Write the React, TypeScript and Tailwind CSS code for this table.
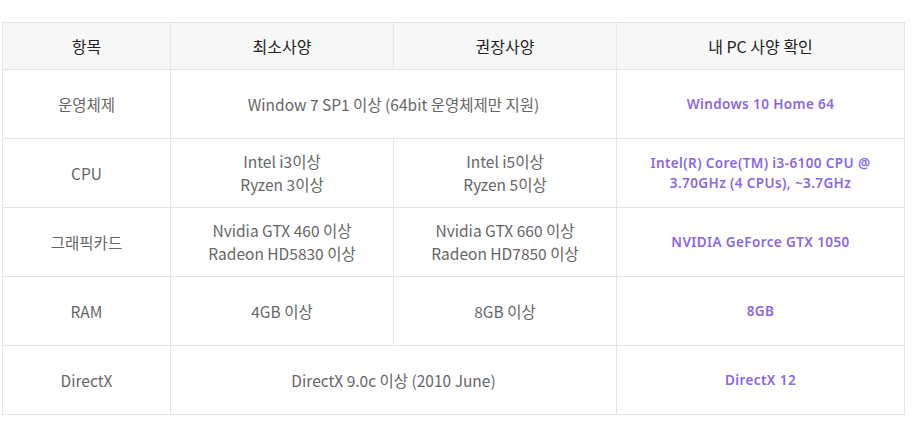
const rows: { label: string; min: string[]; rec?: string[]; mine: string[] }[] = [
  { label: '운영체제', min: ['Window 7 SP1 이상 (64bit 운영체제만 지원)'], mine: ['Windows 10 Home 64'] },
  { label: 'CPU', min: ['Intel i3이상', 'Ryzen 3이상'], rec: ['Intel i5이상', 'Ryzen 5이상'], mine: ['Intel(R) Core(TM) i3-6100 CPU @', '3.70GHz (4 CPUs), ~3.7GHz'] },
  { label: '그래픽카드', min: ['Nvidia GTX 460 이상', 'Radeon HD5830 이상'], rec: ['Nvidia GTX 660 이상', 'Radeon HD7850 이상'], mine: ['NVIDIA GeForce GTX 1050'] },
  { label: 'RAM', min: ['4GB 이상'], rec: ['8GB 이상'], mine: ['8GB'] },
  { label: 'DirectX', min: ['DirectX 9.0c 이상 (2010 June)'], mine: ['DirectX 12'] },
];

const lines = (xs: string[]) => xs.map((t, i) => <div key={i}>{t}</div>);

export default function App() {
  return (
    <div className="w-[911px] h-[423px] bg-white pt-[22px] pl-[2px] font-['Noto_Sans_CJK_KR','Noto_Sans',sans-serif]">
      <table className="w-[902px] border-collapse table-fixed text-center">
        <colgroup>
          <col className="w-[168px]" />
          <col className="w-[223px]" />
          <col className="w-[223px]" />
          <col className="w-[288px]" />
        </colgroup>
        <thead className="bg-[#f7f7f7] text-[#222] text-[16px]">
          <tr className="h-[47px]">
            <th className="border border-[#e5e5e5] font-normal">항목</th>
            <th className="border border-[#e5e5e5] font-normal">최소사양</th>
            <th className="border border-[#e5e5e5] font-normal">권장사양</th>
            <th className="border border-[#e5e5e5] font-normal">내 PC 사양 확인</th>
          </tr>
        </thead>
        <tbody className="text-[#666] text-[15.5px] leading-[23px]">
          {rows.map((r) => (
            <tr key={r.label} className="h-[69px]">
              <td className="border border-[#e5e5e5]">{r.label}</td>
              {r.rec ? (
                <>
                  <td className="border border-[#e5e5e5]">{lines(r.min)}</td>
                  <td className="border border-[#e5e5e5]">{lines(r.rec)}</td>
                </>
              ) : (
                <td colSpan={2} className="border border-[#e5e5e5]">{lines(r.min)}</td>
              )}
              <td className="border border-[#e5e5e5] font-['Noto_Sans',sans-serif] font-semibold text-[13.5px] tracking-[0.4px] leading-[20px] text-[#8a66e6] px-3">
                {lines(r.mine)}
              </td>
            </tr>
          ))}
        </tbody>
      </table>
    </div>
  );
}
